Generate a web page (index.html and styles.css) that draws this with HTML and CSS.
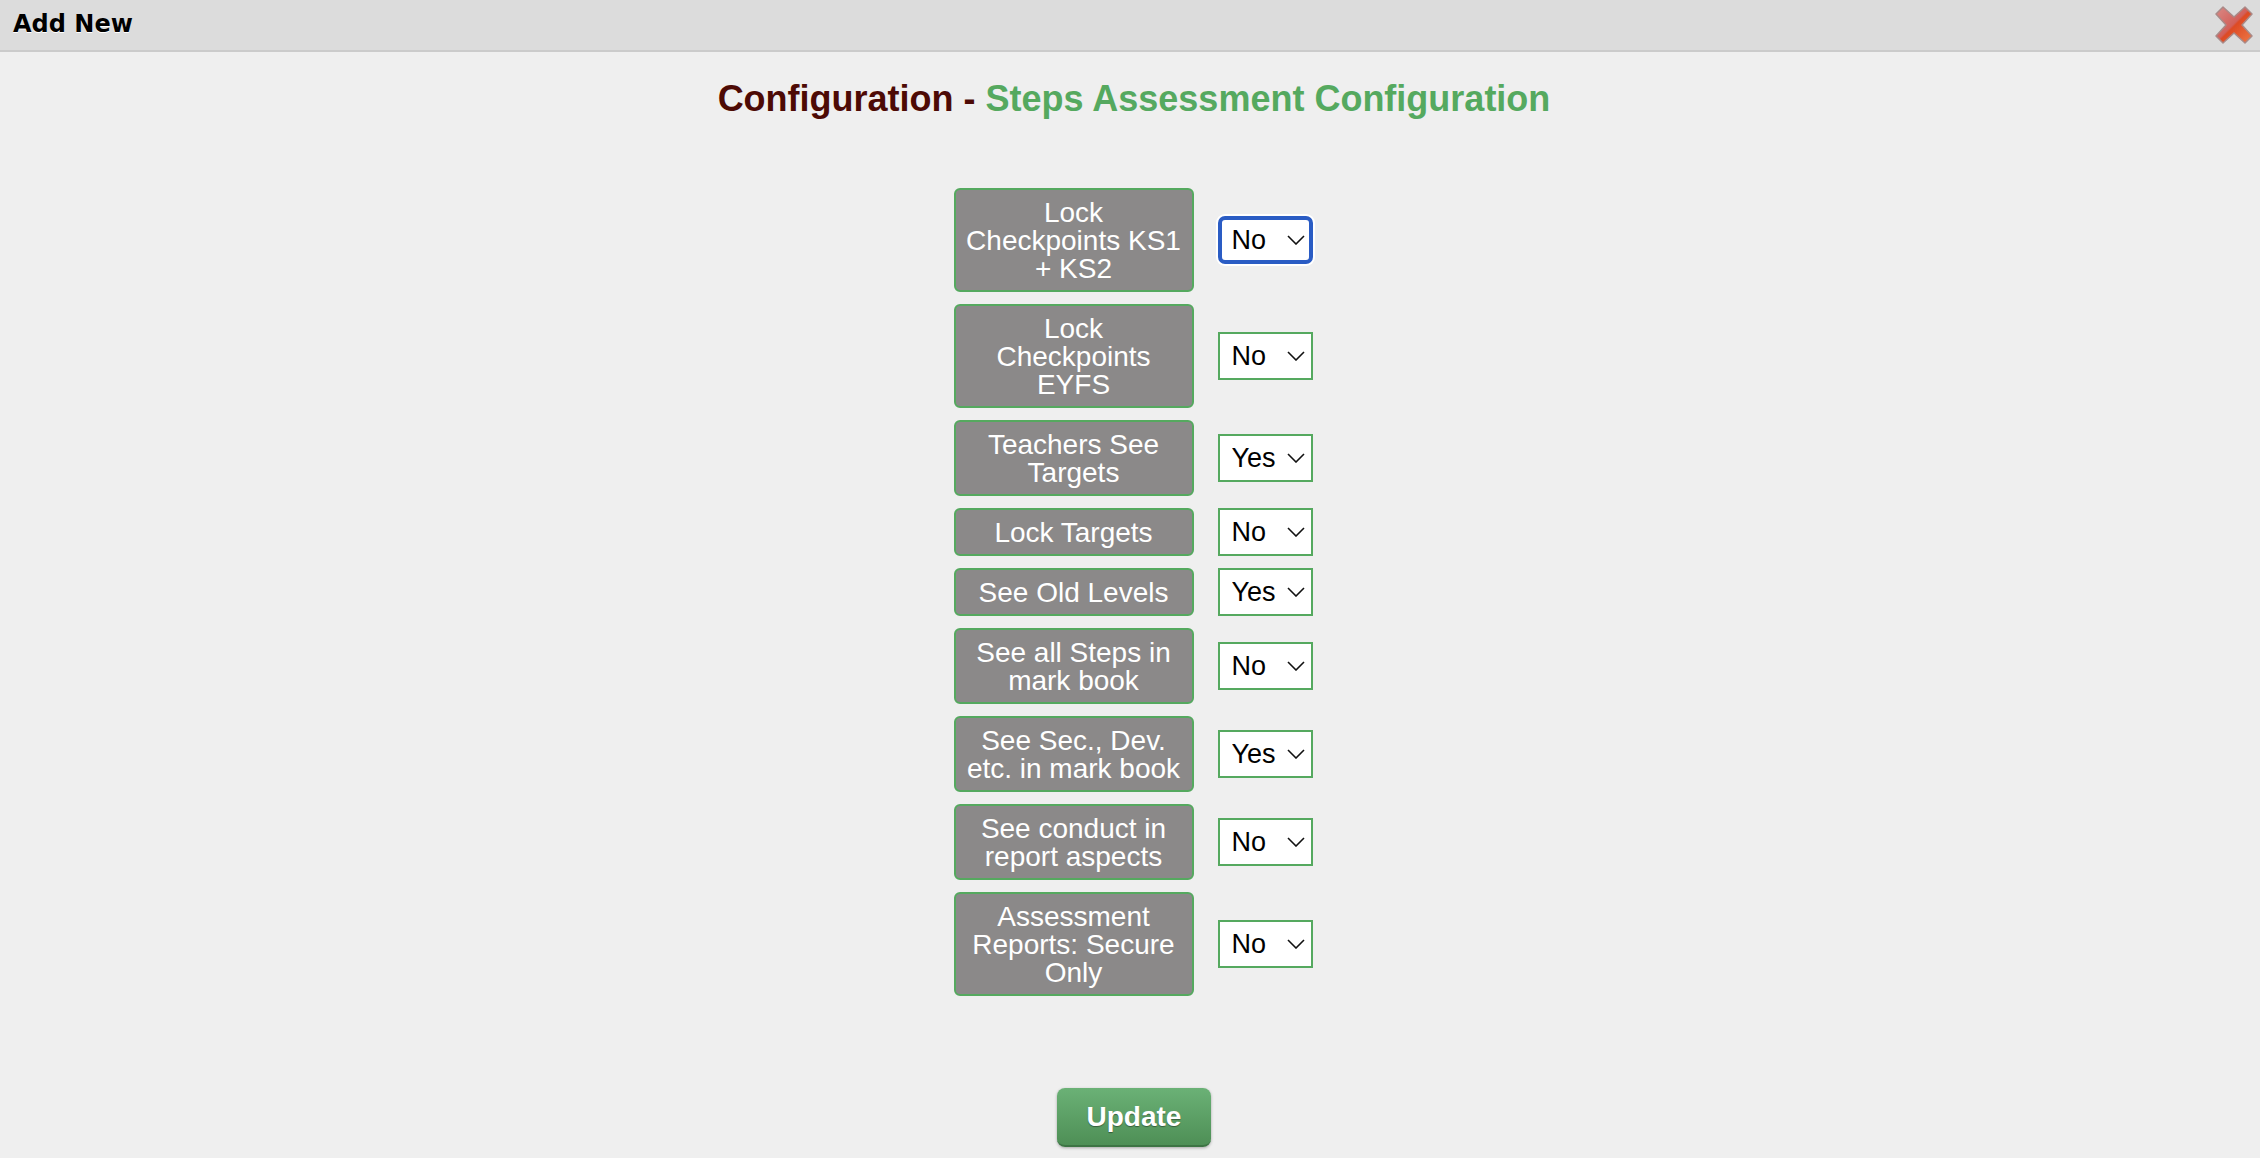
FILE: index.html
```html
<!DOCTYPE html>
<html lang="en">
<head>
    <meta charset="UTF-8">
    <meta name="viewport" content="width=device-width, initial-scale=1.0">
    <title>Add New</title>
    <link rel="stylesheet" href="styles.css">
</head>
<body>
    <div class="titlebar">
        <span class="titlebar-text">Add New</span>
        <svg class="close-icon" viewBox="0 0 38 38" width="38" height="38">
            <defs>
                <linearGradient id="closeFill" x1="0" y1="0" x2="1" y2="1">
                    <stop offset="0" stop-color="#d98a86"/>
                    <stop offset="0.48" stop-color="#d2605a"/>
                    <stop offset="0.52" stop-color="#dd4a24"/>
                    <stop offset="1" stop-color="#ee7a48"/>
                </linearGradient>
            </defs>
            <polygon points="8,1 19,11 30,1 37,8 27,19 37,30 30,37 19,27 8,37 1,30 11,19 1,8" fill="url(#closeFill)" stroke="#a98a88" stroke-width="1.5" stroke-linejoin="round"/>
        </svg>
    </div>

    <div class="content">
        <h1 class="page-title">Configuration - <span class="page-title-sub">Steps Assessment Configuration</span></h1>

        <form class="config-form">
            <div class="config-label">Lock Checkpoints KS1 + KS2</div>
            <div class="select-wrap">
                <select class="config-select is-focused"><option>No</option><option>Yes</option></select>
                <svg class="select-arrow" viewBox="0 0 18 10" width="18" height="10"><path d="M1 1l8 8 8-8" fill="none" stroke="#111" stroke-width="1.6"/></svg>
            </div>

            <div class="config-label">Lock Checkpoints EYFS</div>
            <div class="select-wrap">
                <select class="config-select"><option>No</option><option>Yes</option></select>
                <svg class="select-arrow" viewBox="0 0 18 10" width="18" height="10"><path d="M1 1l8 8 8-8" fill="none" stroke="#111" stroke-width="1.6"/></svg>
            </div>

            <div class="config-label">Teachers See Targets</div>
            <div class="select-wrap">
                <select class="config-select"><option>Yes</option><option>No</option></select>
                <svg class="select-arrow" viewBox="0 0 18 10" width="18" height="10"><path d="M1 1l8 8 8-8" fill="none" stroke="#111" stroke-width="1.6"/></svg>
            </div>

            <div class="config-label">Lock Targets</div>
            <div class="select-wrap">
                <select class="config-select"><option>No</option><option>Yes</option></select>
                <svg class="select-arrow" viewBox="0 0 18 10" width="18" height="10"><path d="M1 1l8 8 8-8" fill="none" stroke="#111" stroke-width="1.6"/></svg>
            </div>

            <div class="config-label">See Old Levels</div>
            <div class="select-wrap">
                <select class="config-select"><option>Yes</option><option>No</option></select>
                <svg class="select-arrow" viewBox="0 0 18 10" width="18" height="10"><path d="M1 1l8 8 8-8" fill="none" stroke="#111" stroke-width="1.6"/></svg>
            </div>

            <div class="config-label">See all Steps in mark book</div>
            <div class="select-wrap">
                <select class="config-select"><option>No</option><option>Yes</option></select>
                <svg class="select-arrow" viewBox="0 0 18 10" width="18" height="10"><path d="M1 1l8 8 8-8" fill="none" stroke="#111" stroke-width="1.6"/></svg>
            </div>

            <div class="config-label">See Sec., Dev. etc. in mark book</div>
            <div class="select-wrap">
                <select class="config-select"><option>Yes</option><option>No</option></select>
                <svg class="select-arrow" viewBox="0 0 18 10" width="18" height="10"><path d="M1 1l8 8 8-8" fill="none" stroke="#111" stroke-width="1.6"/></svg>
            </div>

            <div class="config-label">See conduct in report aspects</div>
            <div class="select-wrap">
                <select class="config-select"><option>No</option><option>Yes</option></select>
                <svg class="select-arrow" viewBox="0 0 18 10" width="18" height="10"><path d="M1 1l8 8 8-8" fill="none" stroke="#111" stroke-width="1.6"/></svg>
            </div>

            <div class="config-label">Assessment Reports: Secure Only</div>
            <div class="select-wrap">
                <select class="config-select"><option>No</option><option>Yes</option></select>
                <svg class="select-arrow" viewBox="0 0 18 10" width="18" height="10"><path d="M1 1l8 8 8-8" fill="none" stroke="#111" stroke-width="1.6"/></svg>
            </div>
        </form>

        <button class="update-button" type="button">Update</button>
    </div>
</body>
</html>
```

FILE: styles.css
```css
html, body {
    height: 100%;
}
body {
    margin: 0;
    overflow: hidden;
    background-color: #efefef;
    font-family: "Liberation Sans", Arial, sans-serif;
    color: #000;
}
.titlebar {
    display: flex;
    align-items: center;
    justify-content: space-between;
    box-sizing: border-box;
    height: 52px;
    padding: 0 6px 0 13px;
    background-color: #dcdcdc;
    border-bottom: 2px solid #cbcbcb;
}
.titlebar-text {
    margin-bottom: 2px;
    font-family: "DejaVu Sans", Verdana, sans-serif;
    font-size: 24px;
    font-weight: bold;
    text-shadow: 0 1px 0 #fff;
}
.close-icon {
    display: block;
    margin-right: 1px;
    filter: blur(0.5px);
}
.content {
    display: flex;
    flex-direction: column;
    align-items: center;
    padding-left: 6px;
}
.page-title {
    margin: 25px 0 0 2px;
    height: 44px;
    line-height: 44px;
    font-size: 36px;
    font-weight: bold;
    color: #4d0a05;
}
.page-title-sub {
    color: #55a95f;
}
.config-form {
    display: grid;
    grid-template-columns: 240px auto;
    column-gap: 24px;
    row-gap: 12px;
    align-items: center;
    margin-top: 67px;
}
.config-label {
    box-sizing: border-box;
    padding: 9px 10px 7px;
    background-color: #8b8989;
    border: 2px solid #55a95f;
    border-radius: 6px;
    color: #fff;
    font-size: 28px;
    line-height: 28px;
    text-align: center;
}
.select-wrap {
    position: relative;
    width: 95px;
    height: 48px;
}
.config-select {
    display: block;
    box-sizing: border-box;
    width: 100%;
    height: 100%;
    padding: 0 0 0 12px;
    appearance: none;
    background-color: #fff;
    border: 2px solid #55a95f;
    border-radius: 0;
    color: #000;
    font-family: "Liberation Sans", Arial, sans-serif;
    font-size: 27px;
}
.config-select.is-focused {
    border: 4px solid #2a5cc4;
    border-radius: 7px;
    box-shadow: 0 0 0 2px #fff;
    padding-left: 10px;
}
.select-arrow {
    position: absolute;
    top: 19px;
    right: 8px;
    pointer-events: none;
}
.update-button {
    box-sizing: border-box;
    width: 154px;
    height: 59px;
    margin: 92px 0 0 2px;
    background: linear-gradient(#6bb176, #4e8f56);
    border: none;
    border-bottom: 2px solid #3d7444;
    border-radius: 8px;
    box-shadow: 0 1px 3px rgba(0, 0, 0, 0.3);
    color: #fff;
    font-family: "Liberation Sans", Arial, sans-serif;
    font-size: 28px;
    font-weight: bold;
    text-shadow: 0 1px 1px rgba(0, 0, 0, 0.4);
    cursor: pointer;
}
```
